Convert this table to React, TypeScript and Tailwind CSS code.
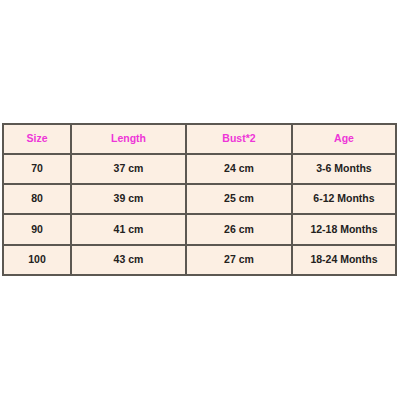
const header = ['Size', 'Length', 'Bust*2', 'Age']

const rows = [
  ['70', '37 cm', '24 cm', '3-6 Months'],
  ['80', '39 cm', '25 cm', '6-12 Months'],
  ['90', '41 cm', '26 cm', '12-18 Months'],
  ['100', '43 cm', '27 cm', '18-24 Months'],
]

export default function App() {
  return (
    <div className="flex h-[400px] w-[400px] flex-col bg-white pt-[123px] pl-[2px] font-['Liberation_Sans',Arial,sans-serif] text-[10.5px] font-bold">
      <div className="grid w-[395px] grid-cols-[66px_113px_104px_102px] gap-[2px] bg-[#5c5852] p-[2px]">
        {header.map((label) => (
          <div key={label} className="flex h-[28px] items-center justify-center bg-[#fcefe3] text-[#ee35d8]">
            {label}
          </div>
        ))}
        {rows.map((row) =>
          row.map((cell, i) => (
            <div key={row[0] + i} className="flex h-[28.2px] items-center justify-center bg-[#fcefe3] text-[#232120]">
              {cell}
            </div>
          )),
        )}
      </div>
    </div>
  )
}
